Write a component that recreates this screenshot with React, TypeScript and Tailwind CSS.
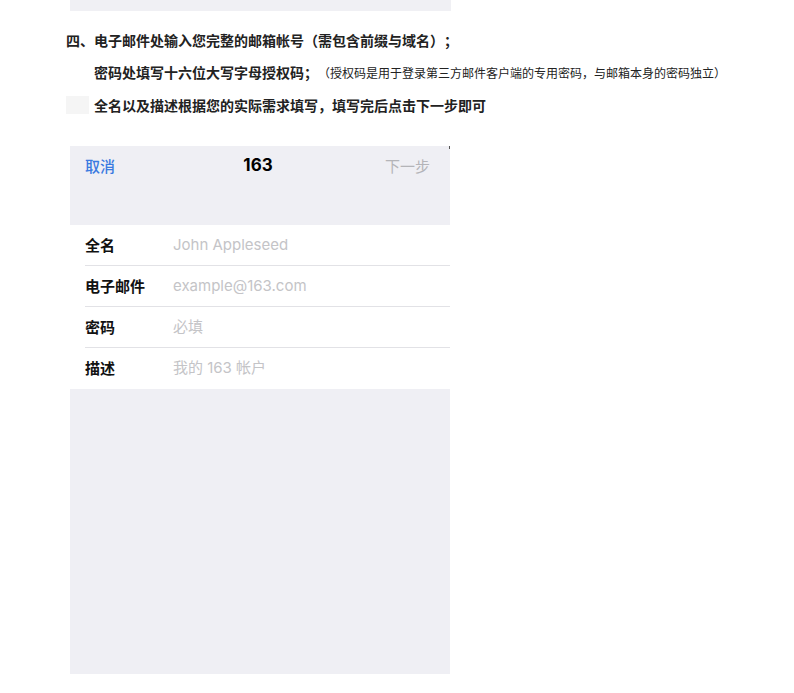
import React from "react";

const cjk = { fontFamily: '"Noto Sans CJK SC", "Noto Sans", sans-serif' };
const ios = { fontFamily: 'Inter, "Noto Sans CJK SC", sans-serif' };

const rows = [
  { label: "全名", value: "John Appleseed" },
  { label: "电子邮件", value: "example@163.com" },
  { label: "密码", value: "必填" },
  { label: "描述", value: "我的 163 帐户" },
];

export default function App() {
  return (
    <main className="min-h-screen bg-white text-[#222] [text-spacing-trim:space-all]" style={cjk}>
      {/* 上一张截图的底边 */}
      <div className="ml-[70px] w-[381px] h-[11px] bg-[#f0f0f4]" />

      <div className="mt-[13px] text-[14px] font-bold leading-[32px]">
        <p className="pl-[66px]">四、电子邮件处输入您完整的邮箱帐号（需包含前缀与域名）；</p>
        <p className="pl-[94px] flex items-baseline">
          <span>密码处填写十六位大写字母授权码；</span>
          <span className="text-[12px] font-normal">（授权码是用于登录第三方邮件客户端的专用密码，与邮箱本身的密码独立）</span>
        </p>
        <p className="pl-[66px] flex items-center gap-[5px]">
          <span className="w-[23px] h-[18px] bg-[#f5f5f5]" />
          <span>全名以及描述根据您的实际需求填写，填写完后点击下一步即可</span>
        </p>
      </div>

      {/* 手机截图 */}
      <div className="relative mt-[25px] ml-[70px] w-[380px] h-[528px] bg-[#efeff4] flex flex-col" style={ios}>
        <div className="absolute right-0 top-0 w-[1px] h-[3px] bg-[#555]" />
        <div className="h-[79px] pt-[10px]">
          <div className="flex items-center justify-between pl-[15px] pr-[20px] h-[20px] text-[15px]">
            <span className="text-[#3a7ae0] font-medium" style={cjk}>取消</span>
            <span className="font-bold text-[17px] text-black pl-[16px]">163</span>
            <span className="text-[#b4b4b8]" style={cjk}>下一步</span>
          </div>
        </div>
        <div className="bg-white pl-[15px]">
          {rows.map((r, i) => (
            <div
              key={r.label}
              className={`flex items-center h-[41px] ${i < rows.length - 1 ? "border-b border-[#e2e2e6]" : "h-[40px]"}`}
            >
              <span className="w-[88px] text-[15px] font-bold text-[#111]" style={cjk}>{r.label}</span>
              <span className="text-[15px] text-[#c4c4c7]">{r.value}</span>
            </div>
          ))}
        </div>
      </div>
    </main>
  );
}
